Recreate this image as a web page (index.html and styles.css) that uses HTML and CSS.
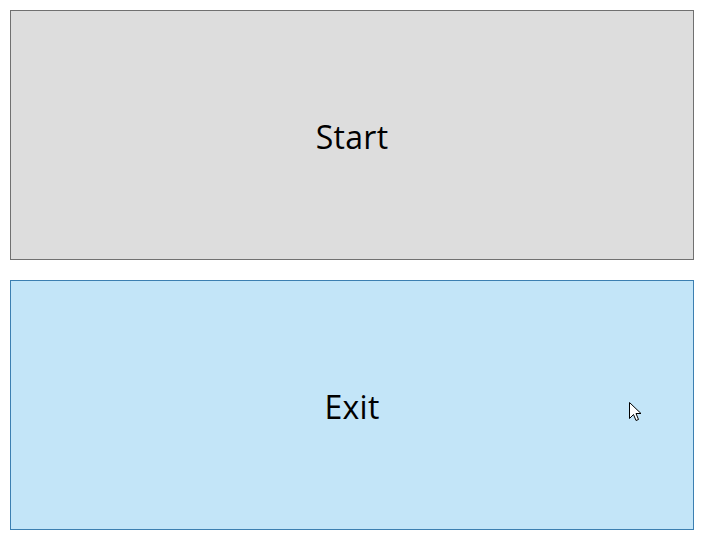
FILE: index.html
```html
<!DOCTYPE html>
<html>
<head>
<meta charset="utf-8">
<link rel="stylesheet" href="styles.css">
</head>
<body>
<div class="panel">
  <button class="btn btn-normal"><span class="label">Start</span></button>
  <button class="btn btn-hover"><span class="label">Exit</span></button>
</div>
<svg class="cursor" width="13" height="21" viewBox="0 0 13 21">
  <path d="M0.5 0.5 L0.5 16.5 L4.5 12.5 L7 18.5 L9.5 17.5 L7 11.5 L12 11.5 Z" fill="#fff" stroke="#000" stroke-width="1"/>
</svg>
</body>
</html>
```
FILE: styles.css
```css
html, body {
  margin: 0;
  padding: 0;
  background: #ffffff;
}
.panel {
  padding: 10px;
  display: flex;
  flex-direction: column;
  gap: 20px;
  width: 684px;
}
.btn {
  box-sizing: border-box;
  width: 684px;
  height: 250px;
  border: 1px solid;
  margin: 0;
  font-family: "Open Sans", "Noto Sans", sans-serif;
  font-size: 32px;
  color: #000;
  padding: 2px 0 0 0;
  display: flex;
  align-items: center;
  justify-content: center;
}
.label {
  letter-spacing: 0.3px;
}
.btn-normal {
  background: #dddddd;
  border-color: #707070;
}
.btn-hover {
  background: #c3e5f8;
  border-color: #3c7fb1;
}
.cursor {
  position: absolute;
  left: 629px;
  top: 402px;
}
```
